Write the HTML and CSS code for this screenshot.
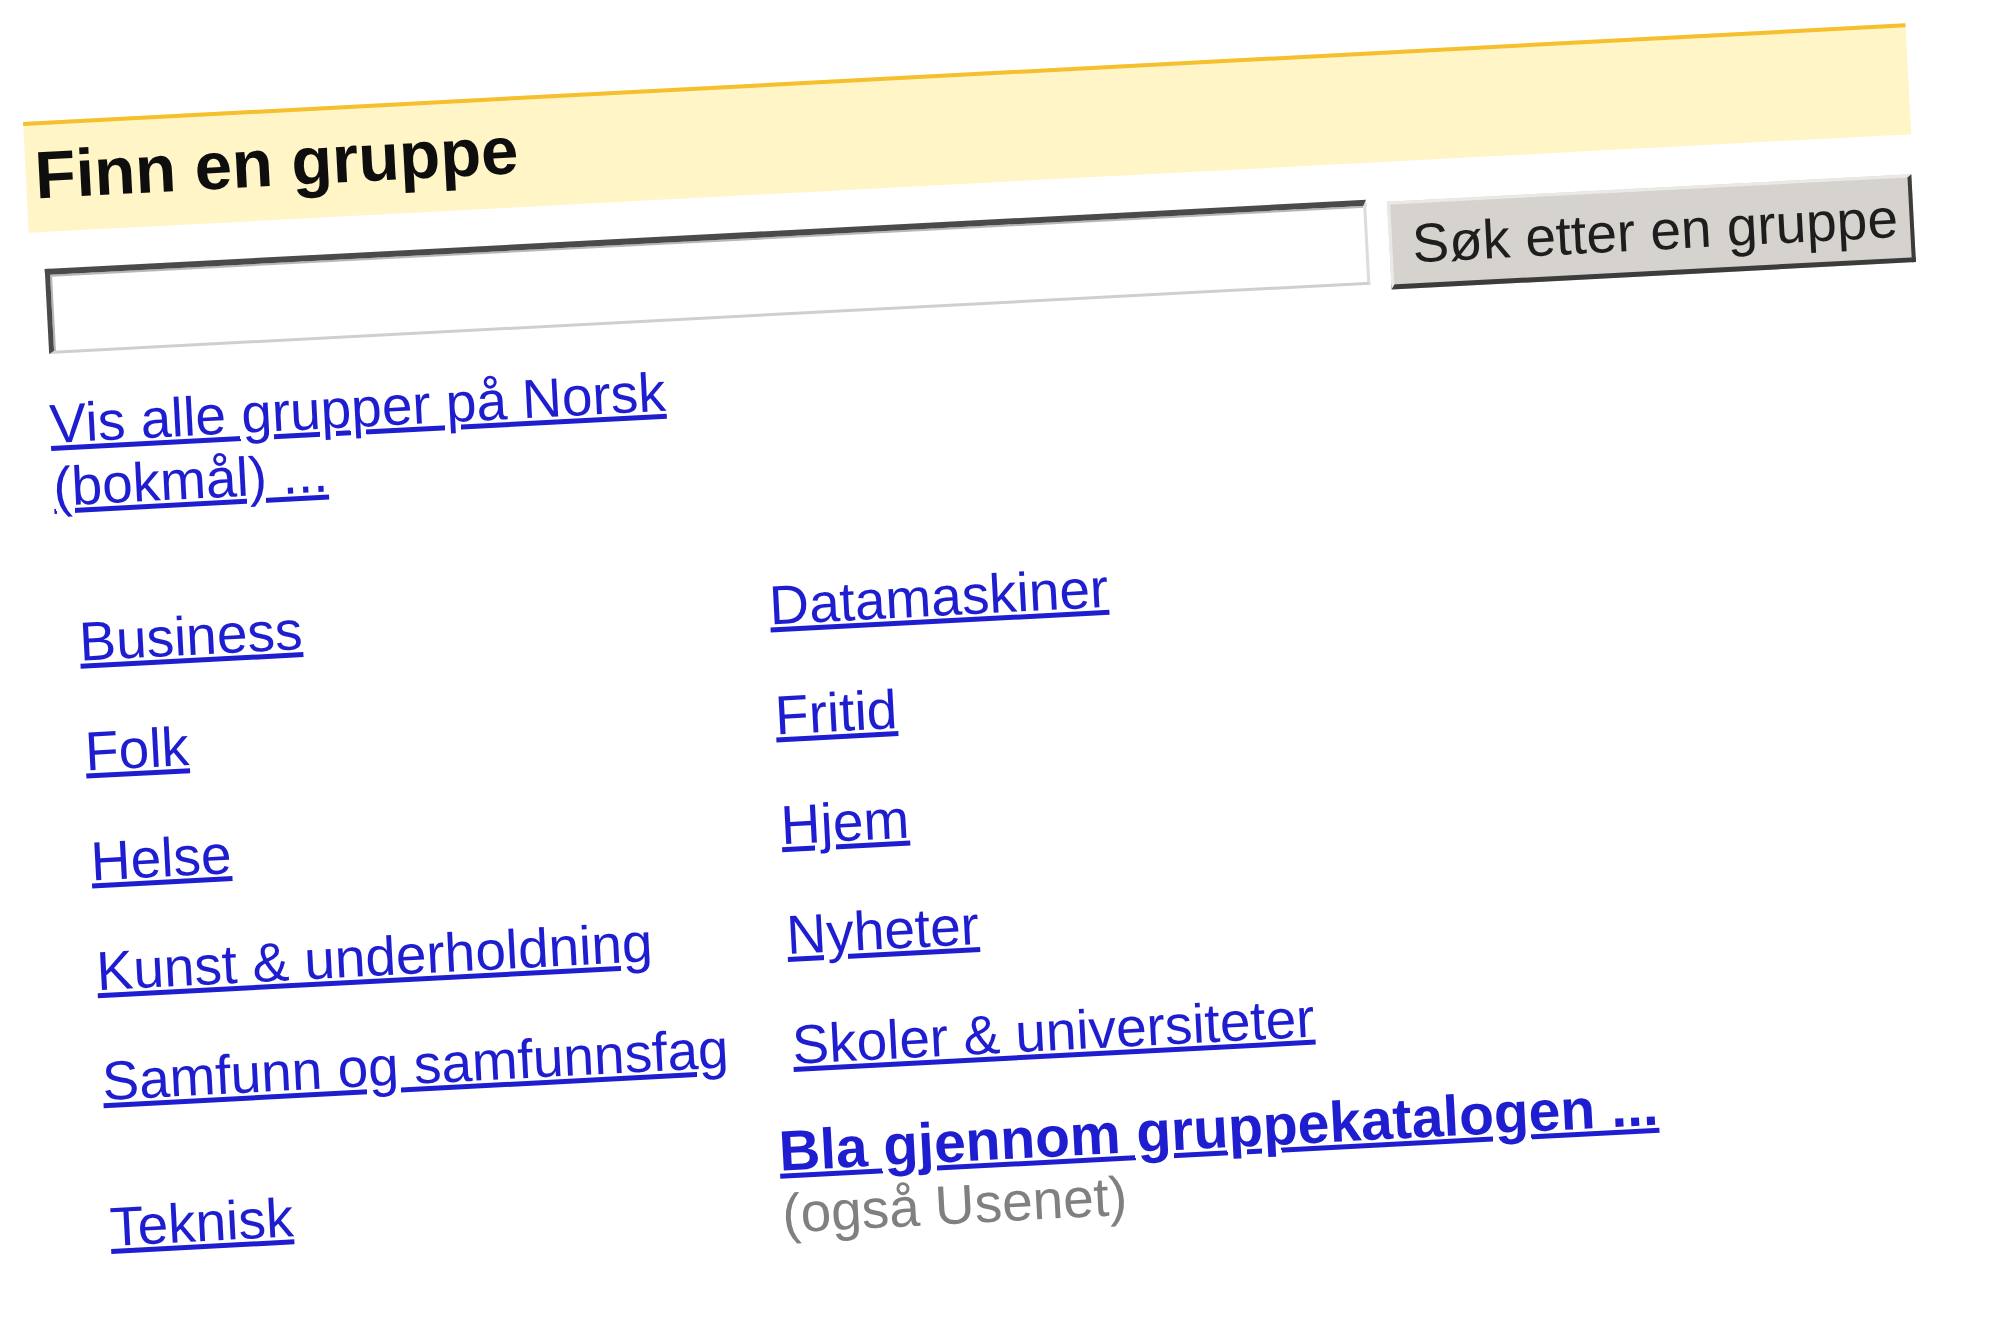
FILE: index.html
```html
<!DOCTYPE html>
<html lang="no">
<head>
<meta charset="utf-8">
<title>Finn en gruppe</title>
<link rel="stylesheet" href="styles.css">
</head>
<body>
<div class="page">
  <div class="bar">
    <h2 class="title">Finn en gruppe</h2>
  </div>
  <form class="search">
    <input class="query" type="text">
    <button class="btn" type="button">Søk etter en gruppe</button>
  </form>
  <a class="link all" href="#">Vis alle grupper på Norsk (bokmål) ...</a>
  <div class="cats">
    <a class="link" href="#">Business</a>
    <a class="link" href="#">Datamaskiner</a>
    <a class="link" href="#">Folk</a>
    <a class="link" href="#">Fritid</a>
    <a class="link" href="#">Helse</a>
    <a class="link" href="#">Hjem</a>
    <a class="link" href="#">Kunst &amp; underholdning</a>
    <a class="link" href="#">Nyheter</a>
    <a class="link" href="#">Samfunn og samfunnsfag</a>
    <a class="link" href="#">Skoler &amp; universiteter</a>
    <a class="link tek" href="#">Teknisk</a>
    <div class="browse">
      <a class="link bold" href="#">Bla gjennom gruppekatalogen ...</a>
      <div class="note">(også Usenet)</div>
    </div>
  </div>
</div>
</body>
</html>
```
FILE: styles.css
```css
html, body {
  margin: 0;
  padding: 0;
  background: #ffffff;
  overflow: hidden;
}

body {
  font-family: "Liberation Sans", Arial, sans-serif;
}

.page {
  margin: 122px 0 0 23px;
  width: 1885px;
  transform: rotate(-3deg);
  transform-origin: 0 0;
}

.bar {
  background: #fff5c6;
  border-top: 4px solid #f6bf2d;
  padding: 11px 0 19px 9px;
}

.title {
  margin: 0;
  font-size: 67px;
  line-height: 77px;
  font-weight: bold;
  color: #0e0e0e;
}

.search {
  margin: 37px 0 0 14px;
  display: flex;
  align-items: flex-start;
  gap: 21px;
}

.query {
  box-sizing: border-box;
  width: 1323px;
  height: 85px;
  margin: 0;
  padding: 0;
  background: #ffffff;
  border-style: solid;
  border-width: 6px 3px 3px 5px;
  border-color: #4a4a4a #dcdcdc #cfcfcf #4a4a4a;
  box-shadow: inset 2px 2px 0 #b8b8b8;
  outline: none;
}

.btn {
  box-sizing: border-box;
  width: 525px;
  height: 88px;
  margin: 3px 0 0 0;
  padding: 0 20px;
  background: #d6d3ce;
  border-style: solid;
  border-width: 3px 4px 5px 3px;
  border-color: #ebe9e5 #3c3c3c #3c3c3c #ebe9e5;
  font-family: "Liberation Sans", Arial, sans-serif;
  font-size: 55px;
  color: #1e1e1e;
  white-space: nowrap;
  text-align: center;
}

.link {
  color: #1e1ed0;
  text-decoration: underline;
  font-size: 55px;
  line-height: 63px;
}

.all {
  display: block;
  width: 660px;
  margin: 33px 0 0 11px;
}

.cats {
  display: grid;
  grid-template-columns: 691px auto;
  row-gap: 47px;
  margin-top: 93px;
  padding-left: 29px;
  align-items: start;
}

.cats > .link {
  justify-self: start;
}

.tek {
  align-self: end;
  margin-bottom: 22px;
}

.browse {
  margin: -5px 0 0 -19px;
}

.bold {
  font-weight: bold;
  font-size: 57px;
}

.note {
  font-size: 55px;
  line-height: 63px;
  color: #808080;
}
```
